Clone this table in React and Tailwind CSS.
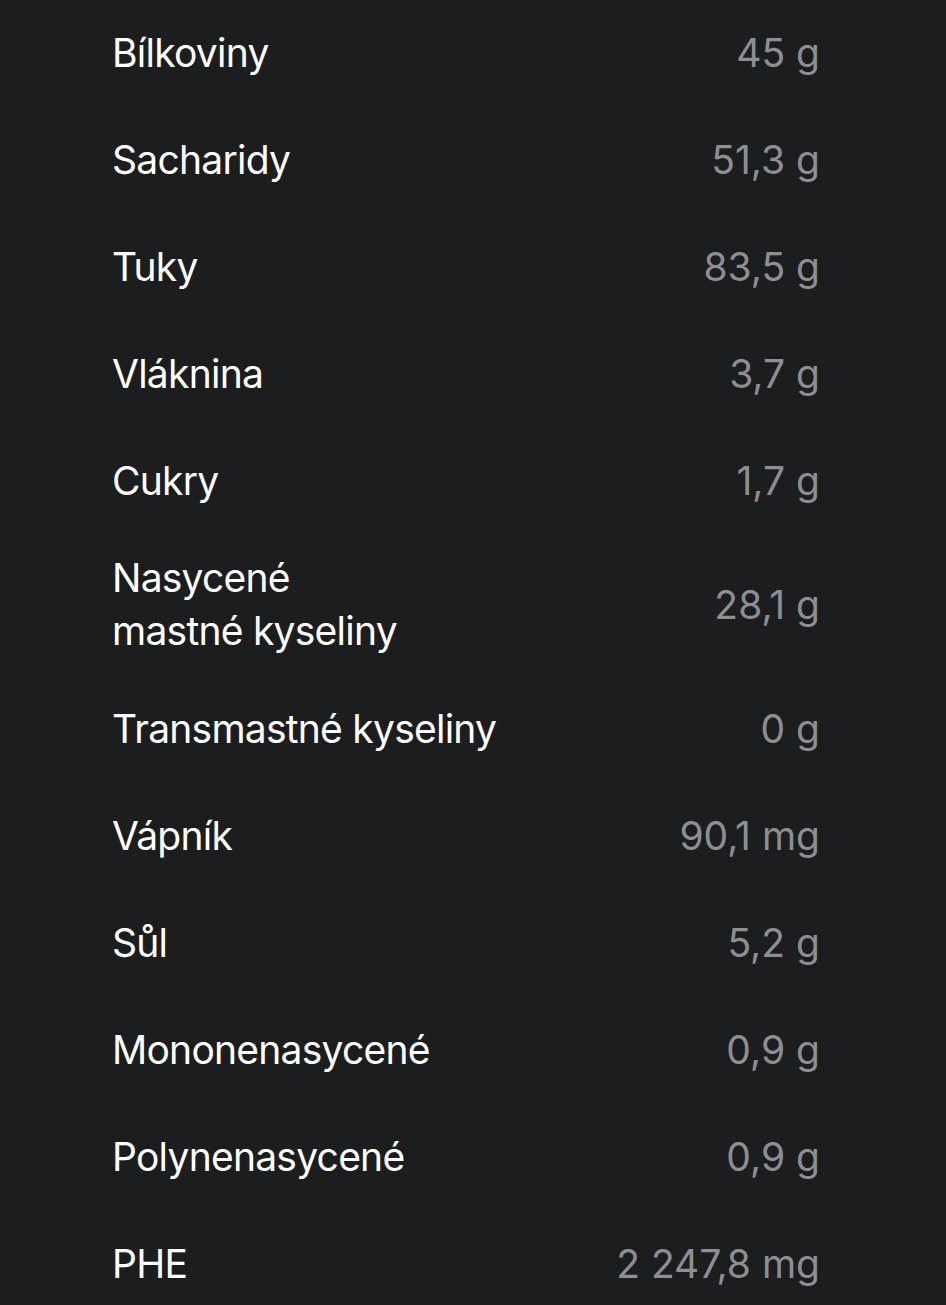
import React from "react";

const nutrients = [
  { label: "Bílkoviny", value: "45 g" },
  { label: "Sacharidy", value: "51,3 g" },
  { label: "Tuky", value: "83,5 g" },
  { label: "Vláknina", value: "3,7 g" },
  { label: "Cukry", value: "1,7 g" },
  { label: ["Nasycené", "mastné kyseliny"], value: "28,1 g" },
  { label: "Transmastné kyseliny", value: "0 g" },
  { label: "Vápník", value: "90,1 mg" },
  { label: "Sůl", value: "5,2 g" },
  { label: "Mononenasycené", value: "0,9 g" },
  { label: "Polynenasycené", value: "0,9 g" },
  { label: "PHE", value: "2 247,8 mg" },
];

function NutrientRow({ label, value }) {
  const twoLines = Array.isArray(label);
  return (
    <div
      className={`flex items-center justify-between pr-[49px] border-b border-[#1e1f21] ${
        twoLines ? "h-[141px]" : "h-[107px]"
      }`}
    >
      <span className="text-white leading-[53px] tracking-[-0.75px]">
        {twoLines ? (
          <>
            {label[0]}
            <br />
            {label[1]}
          </>
        ) : (
          label
        )}
      </span>
      <span className="text-[#8e8e93] leading-[53px] tracking-[0px]">{value}</span>
    </div>
  );
}

export default function App() {
  return (
    <div
      className="bg-[#1c1d1f] h-[1305px] overflow-hidden pl-[112px] pr-[77px] text-[39px]"
      style={{ fontFamily: "Inter, 'Noto Sans', sans-serif" }}
    >
      <div className="-mt-[1px]">
        {nutrients.map((n, i) => (
          <NutrientRow key={i} label={n.label} value={n.value} />
        ))}
      </div>
    </div>
  );
}
